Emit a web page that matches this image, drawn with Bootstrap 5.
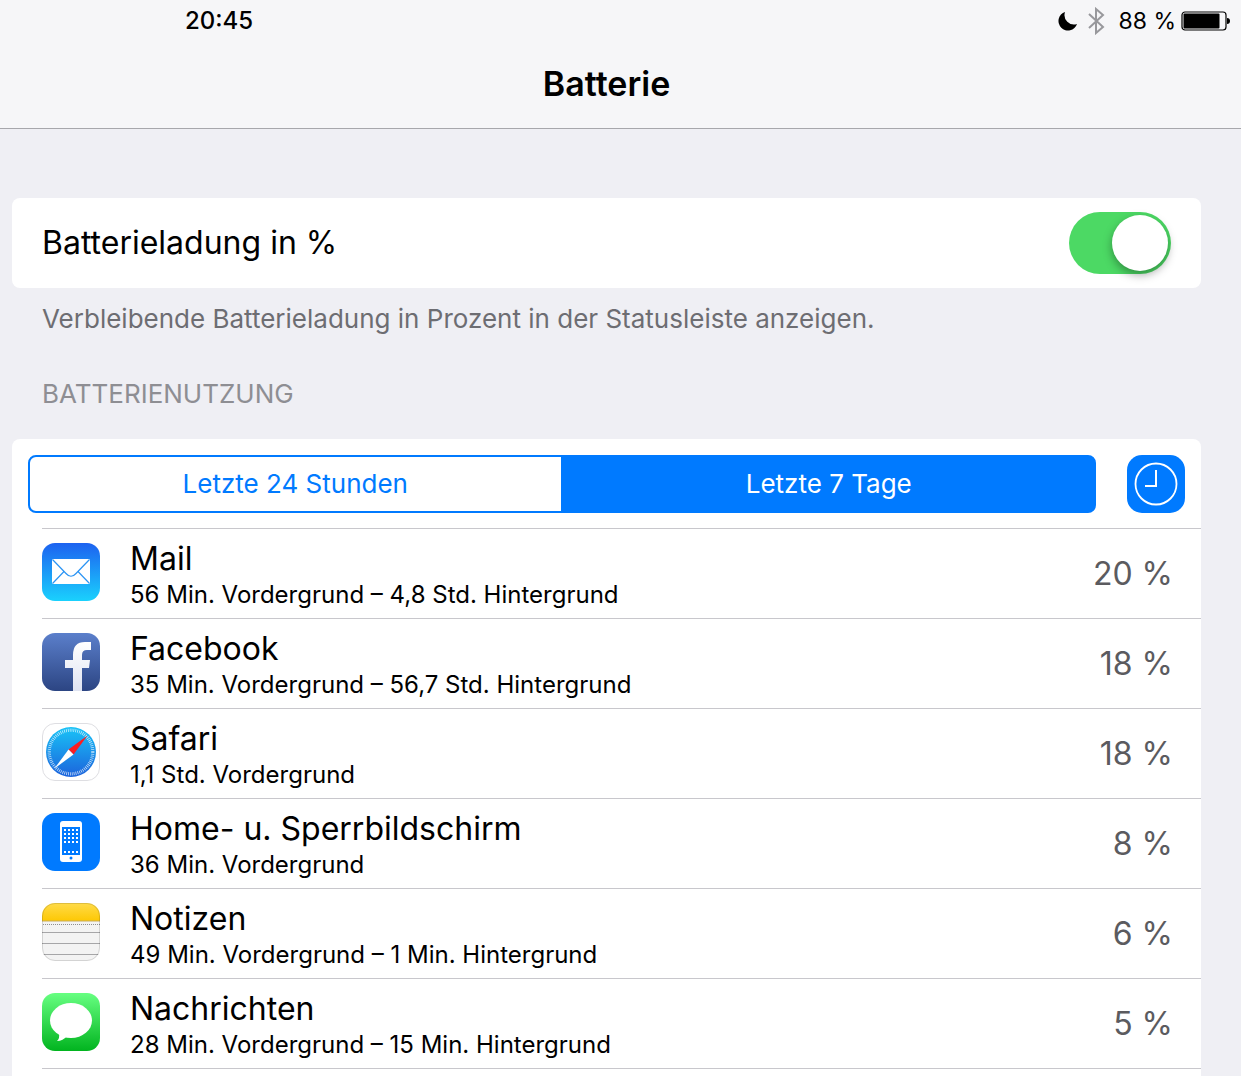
<!DOCTYPE html>
<html lang="de">
<head>
<meta charset="utf-8">
<meta name="viewport" content="width=device-width, initial-scale=1">
<title>Batterie</title>
<link rel="stylesheet" href="https://cdn.jsdelivr.net/npm/bootstrap@5.3.0/dist/css/bootstrap.min.css">
<style>
  :root { --ios-blue: #007aff; --ios-line: #c8c7cc; }
  body { font-family: Inter, "Noto Sans", sans-serif; background: #efeff4; color: #000; font-size: 24px; line-height: 30px; }
  .top-bar { background: #f6f6f8; border-bottom: 1px solid #a7a7ac; }
  .status-bar { height: 42px; font-size: 23px; padding: 0 11px 0 185px; }
  .status-time { font-size: 24px; font-weight: 500; }
  .page-title { font-size: 34px; line-height: 40px; font-weight: 600; padding: 22px 28px 24px 0; }
  .page-body { padding: 69px 40px 0 12px; }
  .panel { background: #fff; border-radius: 8px; }
  .panel-open { border-radius: 8px 8px 0 0; }
  .toggle-row { height: 90px; padding: 0 30px; }
  .big-text { font-size: 32px; line-height: 40px; }
  .hint { font-size: 26px; line-height: 30px; color: #6d6d72; padding: 16px 30px 0; }
  .section-label { font-size: 26px; line-height: 30px; font-weight: 400; color: #8e8e93; padding: 45px 30px 30px; }
  .form-switch .ios-switch { width: 102px; height: 62px; margin: 0; border: 0; border-radius: 31px; background: #e5e5ea; }
  .form-switch .ios-switch:checked { background: #4cd964; }
  .ios-switch::before { content: ""; display: block; width: 56px; height: 56px; margin: 3px; border-radius: 50%; background: #fff; box-shadow: 0 4px 10px rgba(0,0,0,.35); }
  .ios-switch:checked::before { margin-left: 43px; }
  .filter-row { padding: 16px 16px 15px; gap: 31px; }
  .segments .btn { --bs-btn-color: var(--ios-blue); --bs-btn-border-color: var(--ios-blue); --bs-btn-active-color: #fff; --bs-btn-active-bg: var(--ios-blue); --bs-btn-active-border-color: var(--ios-blue); --bs-btn-border-width: 2px; --bs-btn-border-radius: 8px; height: 58px; flex: 1 1 0; padding: 0; font-size: 26px; line-height: 30px; }
  .clock-btn { --bs-btn-bg: var(--ios-blue); --bs-btn-border-width: 0; width: 58px; height: 58px; border-radius: 15px; }
  .usage-list > li { height: 90px; margin-left: 30px; padding-right: 28px; gap: 30px; border-top: 1px solid var(--ios-line); }
  .usage-list > li:last-child { height: 91px; border-bottom: 1px solid var(--ios-line); }
  .app-icon { width: 58px; height: 58px; flex: none; margin-bottom: 4px; }
  .app-name { font-size: 32px; line-height: 42px; }
  .app-time { font-size: 24px; line-height: 30px; }
  .app-share { font-size: 32px; line-height: 40px; color: #5b5b5f; }
</style>
<script src="https://cdn.jsdelivr.net/npm/bootstrap@5.3.0/dist/js/bootstrap.bundle.min.js" defer></script>
</head>
<body class="d-flex flex-column min-vh-100">
<header class="top-bar">
  <div class="status-bar d-flex align-items-center justify-content-between">
    <span class="status-time">20:45</span>
    <div class="d-flex align-items-center">
      <svg width="20" height="20" viewBox="0 0 20 20" class="me-2" aria-hidden="true"><path d="M7 1A9.500 9.500 0 1 0 19 13A9.500 9.500 0 0 1 7 1Z"/></svg>
      <svg width="20" height="28" viewBox="0 0 20 28" class="me-2" aria-hidden="true"><path d="M3 7L17 20L10 26V2L17 8L3 21" fill="none" stroke="#98989c" stroke-width="2"/></svg>
      <span class="ms-1 me-1">88&nbsp;%</span>
      <svg width="50" height="20" viewBox="0 0 50 20" aria-hidden="true"><rect x="2" y="1" width="44" height="18" rx="3" fill="none" stroke="#000" stroke-width="1.200"/><rect x="3.500" y="2.500" width="36" height="15" rx="1"/><path d="M47 7Q50 7 50 10T47 13Z"/></svg>
    </div>
  </div>
  <h1 class="page-title text-center m-0">Batterie</h1>
</header>
<main class="page-body d-flex flex-column flex-grow-1">
  <section class="panel toggle-row form-switch d-flex align-items-center justify-content-between">
    <label class="big-text" for="percent">Batterieladung in %</label>
    <input class="form-check-input ios-switch" type="checkbox" role="switch" id="percent" checked>
  </section>
  <p class="hint m-0">Verbleibende Batterieladung in Prozent in der Statusleiste anzeigen.</p>
  <h2 class="section-label m-0">BATTERIENUTZUNG</h2>
  <section class="panel panel-open flex-grow-1">
    <div class="filter-row d-flex">
      <div class="segments btn-group flex-grow-1" role="group" aria-label="Zeitraum">
        <button type="button" class="btn">Letzte 24 Stunden</button>
        <button type="button" class="btn active" aria-pressed="true">Letzte 7 Tage</button>
      </div>
      <button type="button" class="btn clock-btn p-0 d-flex align-items-center justify-content-center" aria-label="Nutzungsdauer">
        <svg width="58" height="58" viewBox="0 0 58 58" fill="none" stroke="#fff" aria-hidden="true"><circle cx="29" cy="29" r="20.500" stroke-width="1.800"/><path d="M29 15V31H18" stroke-width="2"/></svg>
      </button>
    </div>
    <ul class="usage-list list-unstyled m-0">
      <li class="d-flex align-items-center">
        <svg class="app-icon" viewBox="0 0 58 58" aria-hidden="true"><defs><linearGradient id="gMail" x2="0" y2="1"><stop stop-color="#1d62f0"/><stop offset="1" stop-color="#1ad1fd"/></linearGradient></defs><rect width="58" height="58" rx="13" fill="url(#gMail)"/><rect x="10" y="16" width="38" height="25" rx="1" fill="#fff"/><path d="M10.500 16.500L24 30.500Q29 36 34 30.500L47.500 16.500M10.500 40.500L22 28.500M47.500 40.500L36 28.500" fill="none" stroke="#2b94f4" stroke-width="1.200"/></svg>
        <div class="flex-grow-1"><div class="app-name">Mail</div><div class="app-time">56 Min. Vordergrund – 4,8 Std. Hintergrund</div></div>
        <span class="app-share">20 %</span>
      </li>
      <li class="d-flex align-items-center">
        <svg class="app-icon" viewBox="0 0 58 58" aria-hidden="true"><defs><linearGradient id="gFb" x2="0" y2="1"><stop stop-color="#5b7fcb"/><stop offset="1" stop-color="#2c4583"/></linearGradient><linearGradient id="gF" x2="0" y2="1"><stop stop-color="#fff"/><stop offset="1" stop-color="#dfe3f1"/></linearGradient></defs><rect width="58" height="58" rx="13" fill="url(#gFb)"/><path d="M31 58V35H23V27H31V22Q31 9 43 9H49V17H45Q40 17 40 22V27H48L47 35H40V58Z" fill="url(#gF)"/></svg>
        <div class="flex-grow-1"><div class="app-name">Facebook</div><div class="app-time">35 Min. Vordergrund – 56,7 Std. Hintergrund</div></div>
        <span class="app-share">18 %</span>
      </li>
      <li class="d-flex align-items-center">
        <svg class="app-icon" viewBox="0 0 58 58" aria-hidden="true"><defs><linearGradient id="gSaf" x2="0" y2="1"><stop stop-color="#19c3f7"/><stop offset="1" stop-color="#1c63dc"/></linearGradient></defs><rect x=".5" y=".5" width="57" height="57" rx="12.500" fill="#fff" stroke="#dedee2"/><circle cx="29" cy="29" r="25" fill="url(#gSaf)"/><circle cx="29" cy="29" r="21.800" fill="none" stroke="#fff" stroke-opacity=".75" stroke-width="3.200" stroke-dasharray=".8 1.102"/><path d="M45.500 12.500L26.500 26.500L31.500 31.500Z" fill="#fb1d22"/><path d="M12.500 45.500L26.500 26.500L31.500 31.500Z" fill="#fff"/></svg>
        <div class="flex-grow-1"><div class="app-name">Safari</div><div class="app-time">1,1 Std. Vordergrund</div></div>
        <span class="app-share">18 %</span>
      </li>
      <li class="d-flex align-items-center">
        <svg class="app-icon" viewBox="0 0 58 58" aria-hidden="true"><rect width="58" height="58" rx="13" fill="#007aff"/><rect x="18" y="8" width="22" height="41" rx="3" fill="#fff"/><path d="M20 14H38V42H20Z" fill="#007aff"/><path d="M22 17H37M22 21H37M22 25H37M22 29H37M22 39H37" stroke="#fff" stroke-width="2" stroke-dasharray="2 2"/><circle cx="29" cy="45" r="1.500" fill="#007aff"/></svg>
        <div class="flex-grow-1"><div class="app-name">Home- u. Sperrbildschirm</div><div class="app-time">36 Min. Vordergrund</div></div>
        <span class="app-share">8 %</span>
      </li>
      <li class="d-flex align-items-center">
        <svg class="app-icon" viewBox="0 0 58 58" aria-hidden="true"><defs><linearGradient id="gNote" x2="0" y2="1"><stop stop-color="#ffdb4a"/><stop offset="1" stop-color="#fdc803"/></linearGradient><clipPath id="cNote"><rect width="58" height="58" rx="13"/></clipPath></defs><g clip-path="url(#cNote)"><rect width="58" height="58" fill="#f3f3f3"/><rect width="58" height="18" fill="url(#gNote)"/><path d="M0 18H58" stroke="#c9ad58"/><path d="M1 21.500H58" stroke="#8f8f8f" stroke-dasharray="1 1"/><path d="M0 29.500H58M0 40.500H58M0 51.500H58" stroke="#a6a6a8"/></g><rect x=".5" y=".5" width="57" height="57" rx="12.500" fill="none" stroke="#000" stroke-opacity=".13"/></svg>
        <div class="flex-grow-1"><div class="app-name">Notizen</div><div class="app-time">49 Min. Vordergrund – 1 Min. Hintergrund</div></div>
        <span class="app-share">6 %</span>
      </li>
      <li class="d-flex align-items-center">
        <svg class="app-icon" viewBox="0 0 58 58" aria-hidden="true"><defs><linearGradient id="gMsg" x2="0" y2="1"><stop stop-color="#67ff81"/><stop offset="1" stop-color="#01b41f"/></linearGradient></defs><rect width="58" height="58" rx="13" fill="url(#gMsg)"/><ellipse cx="29" cy="27.500" rx="21" ry="17.500" fill="#fff"/><path d="M17 40Q18 45 15 48Q21 48 25 43Z" fill="#fff"/></svg>
        <div class="flex-grow-1"><div class="app-name">Nachrichten</div><div class="app-time">28 Min. Vordergrund – 15 Min. Hintergrund</div></div>
        <span class="app-share">5 %</span>
      </li>
    </ul>
  </section>
</main>
</body>
</html>
